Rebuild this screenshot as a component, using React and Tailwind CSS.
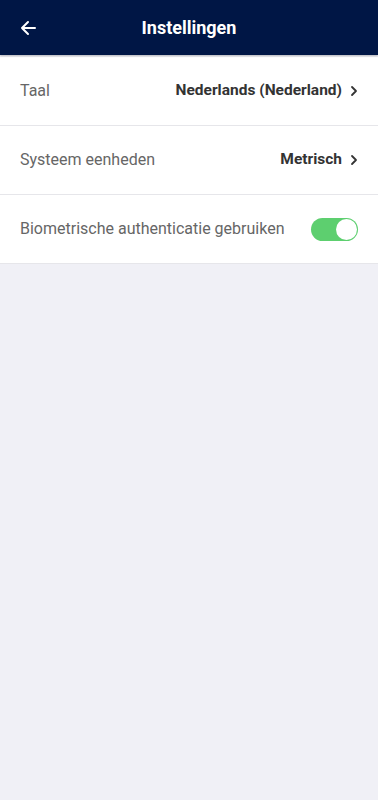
import React, { useState } from "react";

const Chevron = () => (
  <svg width="8" height="12" viewBox="0 0 8 12" className="ml-2">
    <path d="M2 2l4 4-4 4" fill="none" stroke="#333" strokeWidth="1.8" strokeLinecap="round" strokeLinejoin="round" />
  </svg>
);

const Row = ({ label, value, children }) => (
  <div className="flex h-[69px] items-center justify-between border-b border-[#e6e6ea] bg-white pl-5 pr-5">
    <span className="text-[16px] text-[#666]">{label}</span>
    {children || (
      <div className="flex items-center">
        <span className="text-[15.5px] font-bold text-[#333]">{value}</span>
        <Chevron />
      </div>
    )}
  </div>
);

const App = () => {
  const [bio, setBio] = useState(true);

  return (
    <div
      className="min-h-screen bg-[#f0f0f6]"
      style={{ fontFamily: "Roboto, 'Noto Sans', sans-serif" }}
    >
      <div className="relative flex h-[55px] items-center justify-center bg-[#001645] shadow-[0_1px_2px_rgba(0,0,0,0.25)]">
        <button className="absolute left-[18px] top-[18px] p-0">
          <svg width="20" height="20" viewBox="0 0 20 20">
            <path d="M17 10H4M10 4l-6 6 6 6" fill="none" stroke="#fff" strokeWidth="2" strokeLinecap="round" strokeLinejoin="round" />
          </svg>
        </button>
        <h1 className="text-[18px] font-bold text-white">Instellingen</h1>
      </div>

      <div className="mt-[2px]">
        <Row label="Taal" value="Nederlands (Nederland)" />
        <Row label="Systeem eenheden" value="Metrisch" />
        <Row label="Biometrische authenticatie gebruiken">
          <button
            onClick={() => setBio(!bio)}
            className={`flex h-[23px] w-[47px] items-center rounded-full p-[1px] ${bio ? "justify-end bg-[#5dcf6f]" : "justify-start bg-[#ccc]"}`}
          >
            <span className="h-[21px] w-[21px] rounded-full bg-white" />
          </button>
        </Row>
      </div>
    </div>
  );
};

export default App;
